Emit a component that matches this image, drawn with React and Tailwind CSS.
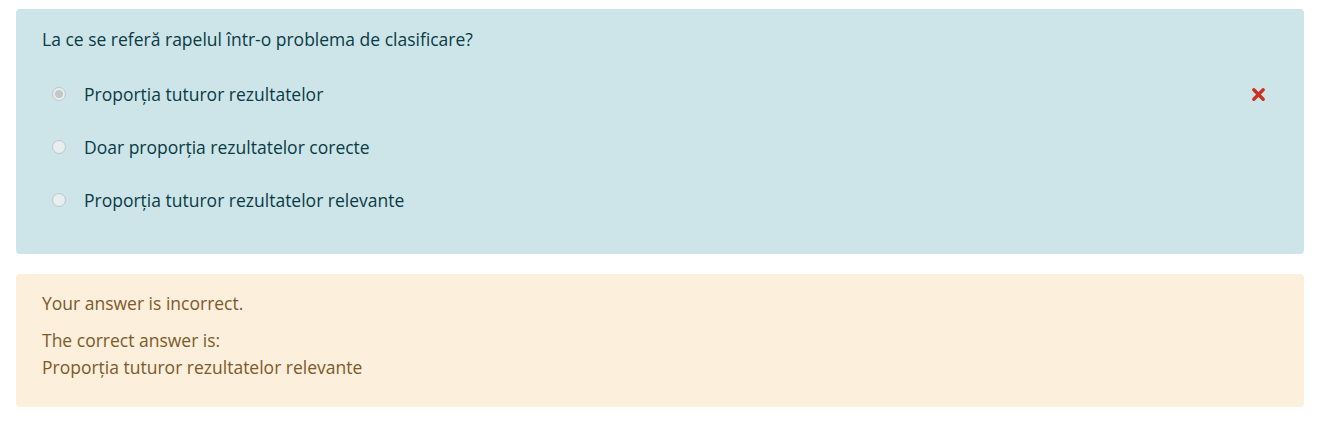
import React from "react";

function Radio({ checked }) {
  return (
    <span className="flex h-[14px] w-[14px] shrink-0 items-center justify-center rounded-full border border-[#bfc6c8] bg-[#e8eeef]">
      {checked && <span className="h-[8px] w-[8px] rounded-full bg-[#c2c7c9]" />}
    </span>
  );
}

export default function App() {
  const options = [
    { text: "Proporția tuturor rezultatelor", checked: true, wrong: true },
    { text: "Doar proporția rezultatelor corecte" },
    { text: "Proporția tuturor rezultatelor relevante" },
  ];
  return (
    <div
      className="w-[1326px] bg-white pl-[16px] pr-[22px] pt-[9px]"
      style={{ fontFamily: '"Open Sans", "Noto Sans", sans-serif' }}
    >
      <div className="rounded-[4px] bg-[#cde5e9] pl-[26px] pr-[38px] pt-[17px] pb-[41px] text-[17.5px] leading-[26px] text-[#0a3b44]">
        <p>La ce se referă rapelul într-o problema de clasificare?</p>
        <div className="mt-[29px] flex flex-col gap-[27px]">
          {options.map((o) => (
            <div key={o.text} className="flex items-center">
              <span className="ml-[10px] mr-[18px]">
                <Radio checked={o.checked} />
              </span>
              <span className="flex-1">{o.text}</span>
              {o.wrong && (
                <svg width="15" height="15" viewBox="0 0 16 16">
                  <path
                    d="M3 3 L13 13 M13 3 L3 13"
                    stroke="#ca3120"
                    strokeWidth="3.6"
                    strokeLinecap="round"
                  />
                </svg>
              )}
            </div>
          ))}
        </div>
      </div>
      <div className="mt-[20px] rounded-[4px] bg-[#fcefdc] pl-[26px] pr-[26px] pt-[16px] pb-[26px] text-[17.5px] leading-[27px] text-[#7d5a29]">
        <p>Your answer is incorrect.</p>
        <p className="mt-[10px]">The correct answer is:</p>
        <p>Proporția tuturor rezultatelor relevante</p>
      </div>
    </div>
  );
}
